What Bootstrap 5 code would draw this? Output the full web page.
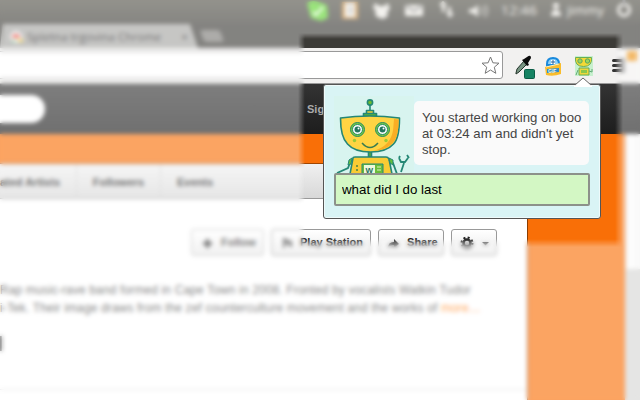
<!DOCTYPE html>
<html lang="en">
<head>
<meta charset="utf-8">
<title>Work log extension</title>
<link rel="stylesheet" href="https://cdn.jsdelivr.net/npm/bootstrap@5.3.0/dist/css/bootstrap.min.css">
<style>
body{width:640px;height:400px;overflow:hidden;background:#fff;font-family:"Liberation Sans",Arial,sans-serif;font-size:11px;color:#333}
.desktop-panel{height:24px;background:linear-gradient(#55544a,#3f3e39);color:#eceae4;padding-left:307px}
.desktop-panel svg{display:block;flex:none}
.tab-strip{height:24px;background:#3c3b37}
.browser-tab{width:198px;height:24px;background:#a5a5a2;clip-path:polygon(3px 0,190px 0,198px 24px,0 24px);font:11.6px/24px "Open Sans",sans-serif;color:#22211f;padding:1px 10px 0 9px;white-space:nowrap}
.new-tab{width:20px;height:12px;background:#7d7c78;transform:skewX(20deg);border-radius:3px;margin:6px 0 0 4px}
.toolbar{height:36px;background:#f2f1f0;border-bottom:1px solid #999}
.omnibox{width:523px;height:28px;margin:3px 0 0 -20px;border:1px solid #999;border-radius:3px;background:#fff;padding-right:2px}
.site-header{height:50px;background:linear-gradient(#333,#1d1d1d)}
.search-pill{width:45px;height:28px;background:#fff;border-radius:0 14px 14px 0}
.sign-in{margin-left:262px;font-size:11px;font-weight:700;color:#aaa}
.page-area{height:266px;background:#f96f07}
.column-main{width:528px;height:237px;margin-top:29px;border-top:1px solid #a04500;border-right:1px solid #8c3d00;background:#fff}
.sections{height:35px;background:linear-gradient(#f0f0f0,#d8d8d8);border-bottom:1px solid #999;font-size:11px;font-weight:700;color:#222;line-height:36px}
.section-link{border-right:1px solid #ccc;white-space:nowrap}
.actions{gap:7px;margin-top:30px;padding-right:30px}
.action{height:27px;border:1px solid #999;border-radius:3px;background:linear-gradient(#fff,#e9e9e9);font-size:11px;font-weight:700;line-height:24px;color:#222;white-space:nowrap}
.action.faded{border-color:#bbb;color:#333}
.bio{font-size:12px;letter-spacing:.13px;line-height:18px;color:#404040;white-space:nowrap;margin-top:25px}
.side-mark{width:2px;height:15px;background:#333;margin-top:19px}
.rule-line{height:1px;background:#ddd;margin-top:38px}
.scroller{width:15px;background:linear-gradient(to right,#e2e2e2,#fff 4px,#f4f4f4) top/100% 135px no-repeat,#d6d6d4}
.veil{inset:0;z-index:5;background:rgba(255,255,255,.37);backdrop-filter:blur(2px);
-webkit-mask-image:linear-gradient(to right,#000 298px,transparent 305px),linear-gradient(to right,transparent 615px,#000 623px),linear-gradient(#000 33px,transparent 39px),linear-gradient(transparent 239px,#000 247px);
mask-image:linear-gradient(to right,#000 298px,transparent 305px),linear-gradient(to right,transparent 615px,#000 623px),linear-gradient(#000 33px,transparent 39px),linear-gradient(transparent 239px,#000 247px)}
.popup{left:323px;top:84px;width:278px;height:135px;z-index:10;border:1px solid #555;border-radius:3px;background:#d9f4f5;box-shadow:inset 0 0 0 1px #effafa;padding:11px 10px 0}
.popup-tip{left:250px;top:-9px}
.portrait{width:80px;height:77px;background:#d8f4ef}
.bubble{width:175px;height:64px;margin-top:5px;border-radius:5px;background:#fafafa;color:#444;font-size:13.2px;line-height:16px;padding:9px 0 0 8px;white-space:nowrap}
.query{width:256px;height:33px;border:2px solid #8c918a;border-radius:2px;background:#d3f7c4;color:#000;font-size:13.3px;padding:0 6px;outline:0}
</style>
<script src="https://cdn.jsdelivr.net/npm/bootstrap@5.3.0/dist/js/bootstrap.bundle.min.js"></script>
</head>
<body class="position-relative">
<div class="desktop-panel d-flex">
<svg width="333" height="24" fill="#eceae4"><path d="M0 3Q5 0 11 2L20 5L21 18L14 21L4 18Z" fill="#5fd42f"/><path d="M6 12l3 3 7-8" fill="none" stroke="#fff" stroke-width="2"/><path d="M35 2h16v17H35z" fill="#c98a3a"/><path d="M38 3h10v14H38z" fill="#f4f3ee"/><path d="M41 7h5m-5 3h5m-5 3h5" stroke="#777"/><path d="M68 3l4 3h5l4-3 2 6-3 3 1 4-5 3-6-2-2-3 1-3-3-3zM98 5h18v11H98z"/><path d="M99 6l8 5 8-5" fill="none" stroke="#777" stroke-width="2"/><path d="M132 12h3V6l-3-1 4-4 4 4-2 1v6zM141 7h3v6h3l-4 5-4-5h2zM162 9h4l5-4v12l-5-4h-4z"/><path d="M174 7q3 4 0 8m4-10q4 6 0 12" fill="none" stroke="#c5c3bd" stroke-width="1.500"/><circle cx="249" cy="6" r="3"/><path d="M244 16q0-5 4-6h2q4 1 4 6z"/><circle cx="317" cy="10" r="5.500" fill="none" stroke="#eceae4" stroke-width="3"/><path d="M317 0v5" stroke="#777" stroke-width="3"/><g font-family="Open Sans,sans-serif" font-size="13.500"><text x="194" y="15" textLength="36" lengthAdjust="spacingAndGlyphs">12:46</text><text x="260" y="15" textLength="37" lengthAdjust="spacingAndGlyphs">jimmy</text></g></svg>
</div>
<div class="tab-strip d-flex">
<div class="browser-tab d-flex align-items-center"><svg class="me-1 flex-shrink-0" width="14" height="14"><circle cx="7" cy="7" r="6" fill="#f3f3f3"/><path d="M3 8q0-4 4-4t4 4z" fill="#e53a2f"/><path d="M8 9h6v3h-4z" fill="#efc62e"/><path d="M2 10h5v2H3z" fill="#7ac78b"/></svg><span>Spletna trgovina Chrome</span><span class="ms-auto">×</span></div>
<div class="new-tab"></div>
</div>
<div class="toolbar d-flex">
<div class="omnibox d-flex align-items-center justify-content-end"><svg width="19" height="19"><path d="M9.500 1l2.400 5.800 6.100.4-4.700 4 1.500 6.100-5.300-3.300-5.300 3.300 1.500-6.100-4.700-4 6.100-.4z" fill="#fff" stroke="#777"/></svg></div>
<svg width="137" height="35"><g transform="translate(-503 -48)">
<path d="M516 73l1-4 7-8 3 3-8 8-3 2z" fill="#789482" stroke="#24352b"/><path d="M522 60l2-1 3-2q4-3 4 1l-3 5 1 2-2 1z" fill="#0b0b0b"/><rect x="524.500" y="69.500" width="10" height="9" rx="1" fill="#168363" stroke="#0b5d46"/>
<path d="M546 73V64q0-7 7-7t7 7v9q-7 3-14 0z" fill="#1989dc"/><path d="M548 64q0-5 5-5t5 5z" fill="#8ed2fa"/><path d="M551 60h4v4h-4z" fill="#fff"/><path d="M553 60v4m-2-2h4" stroke="#26639b"/><path d="M545 67l16-4v11q-8 3-15 1z" fill="#f9bd2c"/><path d="M546 67l13 -3" fill="none" stroke="#fff0bd"/><path d="M547 69l12-1v4l-12 1z" fill="#2d8fd0"/><text x="548" y="73" font-size="5" font-weight="700" fill="#fff8df">GIF</text>
<path d="M575 56h18v20h-18z" fill="#c7f0ce"/><path d="M575.500 57.500h16q1 9-8 9t-8-9z" fill="#f3d936" stroke="#69ad55"/><circle cx="580" cy="61" r="2.200" fill="#9bd55b" stroke="#5da560"/><circle cx="587.500" cy="61" r="2.200" fill="#9bd55b" stroke="#5da560"/><path d="M579 68h10v7h-10z" fill="#efd73c" stroke="#69ad55"/><path d="M576 75l2-5m11 1l3 1v-3" fill="none" stroke="#60a875"/><path d="M581 70h6v3h-6z" fill="#8bc84b"/>
<path d="M613.500 60.500h10m-10 5h10m-10 5h10" stroke="#333" stroke-width="3" stroke-linecap="round"/><path d="M627 51h10v10h-10z" fill="#ed9213"/></g></svg>
</div>
<header class="site-header d-flex align-items-center"><div class="search-pill"></div><span class="sign-in">Sign in</span></header>
<div class="page-area d-flex justify-content-between">
<main class="column-main">
<nav class="sections d-flex"><div class="section-link d-flex justify-content-end pe-3" style="width:77px"><span>ated Artists</span></div><div class="section-link text-center" style="width:84px">Followers</div><div class="ps-3">Events</div></nav>
<div class="actions d-flex justify-content-end">
<div class="action faded px-2" style="width:73px"><svg width="14" height="11" class="me-1"><path d="M7.500 1v9M3 5.500h9" stroke="#333" stroke-width="3"/></svg> Follow</div>
<div class="action px-2" style="width:100px"><svg width="16" height="12" class="me-1"><path d="M4 11V2l7 3v5M4 5l7 3" fill="none" stroke="#444" stroke-width="2"/></svg>Play Station</div>
<div class="action px-2" style="width:66px"><svg width="13" height="11" class="me-1"><path d="M1 10q0-6 6-6V1l5 5-5 4V7q-4 0-6 3z" fill="#222"/></svg> Share</div>
<div class="action px-2" style="width:46px"><svg width="30" height="14"><circle cx="7" cy="7" r="3.500" fill="none" stroke="#222" stroke-width="2.500"/><circle cx="7" cy="7" r="5.500" fill="none" stroke="#222" stroke-width="2" stroke-dasharray="2 2.320"/><path d="M22 6h7l-3.500 3.500z" fill="#333"/></svg></div>
</div>
<div class="bio">
<div>Rap music-rave band formed in Cape Town in 2008. Fronted by vocalists Watkin Tudor</div>
<div>i-Tek. Their image draws from the zef counterculture movement and the works of <span style="color:#ff7a00">more…</span></div>
</div>
<div class="side-mark"></div>
<div class="rule-line"></div>
</main>
<div class="scroller"></div>
</div>
<div class="veil position-absolute"></div>
<section class="popup position-absolute">
<svg class="popup-tip position-absolute" width="20" height="11"><path d="M0 10L9 2L18 10V11H0z" fill="#fff"/><path d="M1 9L9 2L17 9" fill="none" stroke="#666"/></svg>
<div class="d-flex">
<svg class="portrait" viewBox="334 96 80 77">
<g stroke="#258775" stroke-width="1.600" stroke-linejoin="round">
<path d="M370 105v6" /><circle cx="370" cy="102.500" r="2.600" fill="#6dbc30"/><path d="M366.500 110.500h7v4h-7z" fill="#f0ce38"/><path d="M363.500 113.500h13v3h-13z" fill="#58b435"/>
<path d="M368.500 151h3v6h-3z" fill="#5da83b"/><path d="M350 174l3-16q0-1 2-1h31q2 0 3 2l3 15z" fill="#f9cb34"/>
<path d="M340.500 118q29-4 59 0q0 20-6 26q-7 8-23 8t-23-8q-7-7-7-26z" fill="#ffd443"/></g>
<path d="M394 119l4.700.5q0 18-6.500 24-7 7-19 7.500 18-5 20-22z" fill="#f9ae25"/>
<path d="M351 160l-3 8-11 5m52-13l4 3 4 11m4-2l3-9m-5-5l2 4h4l3-4m-9 0l1-2m7-1l2 3" fill="none" stroke="#258775" stroke-width="1.800"/>
<path d="M349 160l3-2-1 6-3 1zM389 158l4 2v5l-3-2z" fill="#63bd3d" stroke="#258775"/>
<g stroke="#268a65" stroke-width="1"><circle cx="357.500" cy="129.500" r="7" fill="#77c943"/><circle cx="357.500" cy="129.500" r="5" fill="#fff"/><circle cx="382.500" cy="129.500" r="7" fill="#77c943"/><circle cx="382.500" cy="129.500" r="5" fill="#fff"/></g>
<circle cx="357.500" cy="129.500" r="3" fill="#21745f"/><circle cx="382.500" cy="129.500" r="3" fill="#21745f"/><circle cx="358.500" cy="128.500" r="1" fill="#fff"/><circle cx="383.500" cy="128.500" r="1" fill="#fff"/>
<circle cx="354.500" cy="140.500" r="1.700" fill="#9bc936"/><circle cx="386" cy="140.500" r="1.700" fill="#9bc936"/><path d="M362 143q8 9 16 0" fill="none" stroke="#397c50" stroke-width="1.500"/>
<path d="M362 164h21v10h-21z" fill="#6abd3a" stroke="#258775"/><path d="M364 165h11v9h-11z" fill="#edf8dc"/><text x="365.500" y="172.500" font-size="8" font-weight="700" fill="#23705e">W</text><path d="M377 167h4m-4 3h4" stroke="#dff1bd"/><path d="M356 166h2m-2 4h2" stroke="#77923e" stroke-width="2"/>
</svg>
<div class="bubble">You started working on boo<br>at 03:24 am and didn't yet<br>stop.</div>
</div>
<input class="query d-block" type="text" value="what did I do last" aria-label="Command">
</section>
</body>
</html>
